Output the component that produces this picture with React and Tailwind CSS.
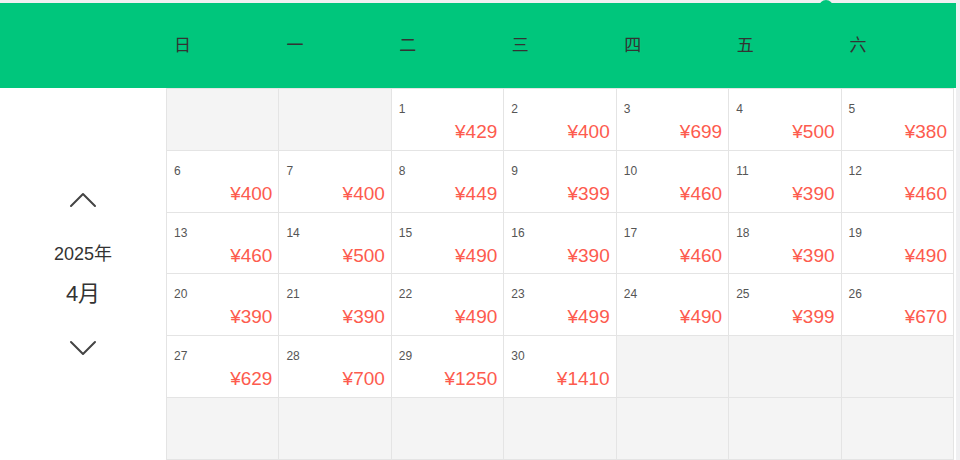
import React from 'react'

const weekdays = ['日', '一', '二', '三', '四', '五', '六']

// April 2025 fare calendar
const prices = [
  429, 400, 699, 500, 380,
  400, 400, 449, 399, 460, 390, 460,
  460, 500, 490, 390, 460, 390, 490,
  390, 390, 490, 499, 490, 399, 670,
  629, 700, 1250, 1410,
]

function Chevron({ up }) {
  return (
    <svg width="28" height="16" viewBox="0 0 28 16" fill="none">
      <path
        d={up ? 'M2 14 L14 2 L26 14' : 'M2 2 L14 14 L26 2'}
        stroke="#444"
        strokeWidth="2"
        strokeLinecap="round"
        strokeLinejoin="round"
      />
    </svg>
  )
}

export default function App() {
  const offset = 2
  const cells = Array.from({ length: 42 }, (_, i) => {
    const day = i - offset + 1
    return day >= 1 && day <= prices.length ? { day, price: prices[day - 1] } : null
  })

  return (
    <div
      className="w-[960px] h-[460px] overflow-hidden bg-[#f0f0f2] pt-[3px] relative"
      style={{ fontFamily: '"Liberation Sans", "Noto Sans CJK SC", sans-serif' }}
    >
      {/* little pointer above header */}
      <div className="absolute left-[819px] top-0 w-[14px] h-[8px] rounded-t-full bg-[#00c67c]" />

      <div className="w-[956px] h-[457px] bg-white flex flex-col">
        {/* weekday header */}
        <div className="h-[85px] bg-[#00c67c] flex shrink-0">
          <div className="w-[166px] shrink-0" />
          <div className="grid grid-cols-7 w-[788px]">
            {weekdays.map((w) => (
              <div key={w} className="flex items-center pl-[8px] text-[17px] text-[#333]">
                {w}
              </div>
            ))}
          </div>
        </div>

        <div className="flex flex-1">
          {/* month switcher */}
          <div className="w-[166px] shrink-0 flex flex-col items-center justify-center text-[#333]">
            <Chevron up />
            <div className="mt-[33px] text-[18px] leading-[26px]">2025年</div>
            <div className="mt-[12px] text-[22px] leading-[30px]">4月</div>
            <div className="mt-[31px]">
              <Chevron />
            </div>
          </div>

          {/* days grid */}
          <div className="grid grid-cols-7 grid-rows-6 w-[788px] border-l border-t border-[#e4e4e4]">
            {cells.map((c, i) =>
              c ? (
                <div key={i} className="relative bg-white border-r border-b border-[#e4e4e4]">
                  <div className="absolute left-[7px] top-[11px] text-[12px] text-[#555]">{c.day}</div>
                  <div className="absolute right-[6px] top-[29px] text-[19px] text-[#fd5b4e]">¥{c.price}</div>
                </div>
              ) : (
                <div key={i} className="bg-[#f4f4f4] border-r border-b border-[#e4e4e4]" />
              )
            )}
          </div>
        </div>
      </div>
    </div>
  )
}
